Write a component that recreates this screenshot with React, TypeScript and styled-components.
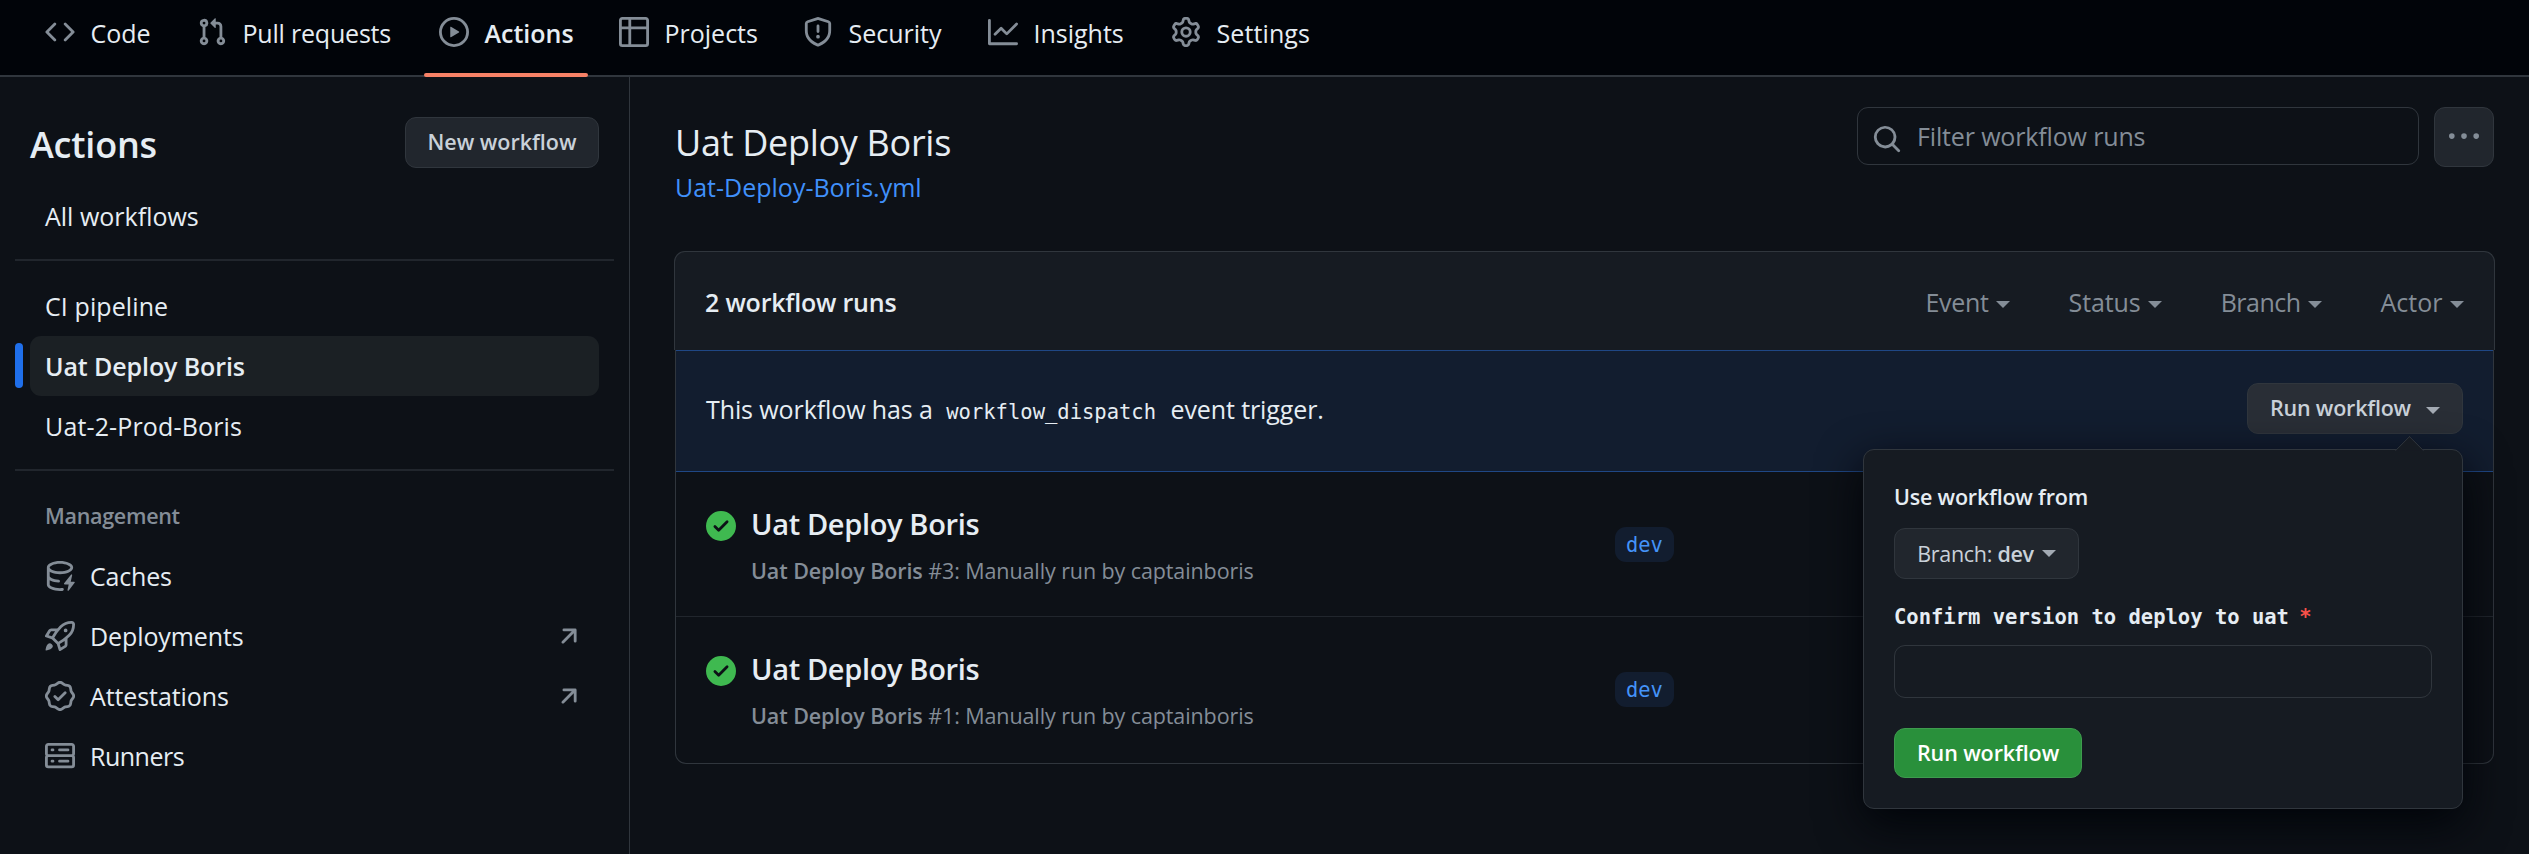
import React from 'react';
import styled, { createGlobalStyle, css } from 'styled-components';

const color = {
  canvas: '#0d1117',
  header: '#010409',
  subtle: '#161b22',
  border: '#30363d',
  divider: '#21262d',
  text: '#e6edf3',
  muted: '#848d97',
  button: '#21262d',
  buttonText: '#c9d1d9',
  link: '#4090fa',
};

const sans = "'Open Sans', 'Noto Sans', sans-serif";
const mono = "'DejaVu Sans Mono', 'Liberation Mono', monospace";

const GlobalStyle = createGlobalStyle`
  * { box-sizing: border-box; }
  body {
    margin: 0;
    background: ${color.canvas};
    color: ${color.text};
    font-family: ${sans};
    font-size: 25px;
    overflow: hidden;
  }
  button, input { font-family: inherit; margin: 0; }
`;

/* ---------- icons ---------- */

const paths = {
  code: 'm11.28 3.22 4.25 4.25a.75.75 0 0 1 0 1.06l-4.25 4.25a.749.749 0 0 1-1.275-.326.749.749 0 0 1 .215-.734L13.94 8l-3.72-3.72a.749.749 0 0 1 .326-1.275.749.749 0 0 1 .734.215Zm-6.56 0a.751.751 0 0 1 1.042.018.751.751 0 0 1 .018 1.042L2.06 8l3.72 3.72a.749.749 0 0 1-.326 1.275.749.749 0 0 1-.734-.215L.47 8.53a.75.75 0 0 1 0-1.06Z',
  pull: 'M1.5 3.25a2.25 2.25 0 1 1 3 2.122v5.256a2.251 2.251 0 1 1-1.5 0V5.372A2.25 2.25 0 0 1 1.5 3.25Zm5.677-.177L9.573.677A.25.25 0 0 1 10 .854V2.5h1A2.5 2.5 0 0 1 13.5 5v5.628a2.251 2.251 0 1 1-1.5 0V5a1 1 0 0 0-1-1h-1v1.646a.25.25 0 0 1-.427.177L7.177 3.427a.25.25 0 0 1 0-.354ZM3.75 2.5a.75.75 0 1 0 0 1.5.75.75 0 0 0 0-1.5Zm0 9.5a.75.75 0 1 0 0 1.5.75.75 0 0 0 0-1.5Zm8.25.75a.75.75 0 1 0 1.5 0 .75.75 0 0 0-1.5 0Z',
  play: 'M8 0a8 8 0 1 1 0 16A8 8 0 0 1 8 0ZM1.5 8a6.5 6.5 0 1 0 13 0 6.5 6.5 0 0 0-13 0Zm4.879-2.773 4.264 2.559a.25.25 0 0 1 0 .428l-4.264 2.559A.25.25 0 0 1 6 10.559V5.442a.25.25 0 0 1 .379-.215Z',
  table: 'M0 1.75C0 .784.784 0 1.75 0h12.5C15.216 0 16 .784 16 1.75v12.5A1.75 1.75 0 0 1 14.25 16H1.75A1.75 1.75 0 0 1 0 14.25ZM6.5 6.5v8h7.75a.25.25 0 0 0 .25-.25V6.5Zm8-1.5V1.75a.25.25 0 0 0-.25-.25H6.5V5Zm-13 1.5v7.75c0 .138.112.25.25.25H5v-8ZM5 5V1.5H1.75a.25.25 0 0 0-.25.25V5Z',
  shield: 'M7.467.133a1.748 1.748 0 0 1 1.066 0l5.25 1.68A1.75 1.75 0 0 1 15 3.48V7c0 1.566-.32 3.182-1.303 4.682-.983 1.498-2.585 2.813-5.032 3.855a1.697 1.697 0 0 1-1.33 0c-2.447-1.042-4.049-2.357-5.032-3.855C1.32 10.182 1 8.566 1 7V3.48a1.75 1.75 0 0 1 1.217-1.667Zm.61 1.429a.25.25 0 0 0-.153 0l-5.25 1.68a.25.25 0 0 0-.174.238V7c0 1.358.275 2.666 1.057 3.86.784 1.194 2.121 2.34 4.366 3.297a.196.196 0 0 0 .154 0c2.245-.956 3.582-2.104 4.366-3.298C13.225 9.666 13.5 8.36 13.5 7V3.48a.251.251 0 0 0-.174-.237l-5.25-1.68ZM8.75 4.75v3a.75.75 0 0 1-1.5 0v-3a.75.75 0 0 1 1.5 0ZM9 10.5a1 1 0 1 1-2 0 1 1 0 0 1 2 0Z',
  graph: 'M1.5 1.75V13.5h13.75a.75.75 0 0 1 0 1.5H.75a.75.75 0 0 1-.75-.75V1.75a.75.75 0 0 1 1.5 0Zm14.28 2.53-5.25 5.25a.75.75 0 0 1-1.06 0L7 7.06 4.28 9.78a.751.751 0 0 1-1.042-.018.751.751 0 0 1-.018-1.042l3.25-3.25a.75.75 0 0 1 1.06 0L10 7.94l4.72-4.72a.751.751 0 0 1 1.042.018.751.751 0 0 1 .018 1.042Z',
  gear: 'M8 0a8.2 8.2 0 0 1 .701.031C9.444.095 9.99.645 10.16 1.29l.288 1.107c.018.066.079.158.212.224.231.114.454.243.668.386.123.082.233.09.299.071l1.103-.303c.644-.176 1.392.021 1.82.63.27.385.506.792.704 1.218.315.675.111 1.422-.364 1.891l-.814.806c-.049.048-.098.147-.088.294.016.257.016.515 0 .772-.01.147.038.246.088.294l.814.806c.475.469.679 1.216.364 1.891a7.977 7.977 0 0 1-.704 1.217c-.428.61-1.176.807-1.82.63l-1.102-.302c-.067-.019-.177-.011-.3.071a5.909 5.909 0 0 1-.668.386c-.133.066-.194.158-.211.224l-.29 1.106c-.168.646-.715 1.196-1.458 1.26a8.006 8.006 0 0 1-1.402 0c-.743-.064-1.289-.614-1.458-1.26l-.289-1.106c-.018-.066-.079-.158-.212-.224a5.738 5.738 0 0 1-.668-.386c-.123-.082-.233-.09-.299-.071l-1.103.303c-.644.176-1.392-.021-1.82-.63a8.12 8.12 0 0 1-.704-1.218c-.315-.675-.111-1.422.363-1.891l.815-.806c.05-.048.098-.147.088-.294a6.214 6.214 0 0 1 0-.772c.01-.147-.038-.246-.088-.294l-.815-.806C.635 6.045.431 5.298.746 4.623a7.92 7.92 0 0 1 .704-1.217c.428-.61 1.176-.807 1.82-.63l1.102.302c.067.019.177.011.3-.071.214-.143.437-.272.668-.386.133-.066.194-.158.211-.224l.29-1.106C6.009.645 6.556.095 7.299.03 7.53.01 7.764 0 8 0Zm-.571 1.525c-.036.003-.108.036-.137.146l-.289 1.105c-.147.561-.549.967-.998 1.189-.173.086-.34.183-.5.29-.417.278-.97.423-1.529.27l-1.103-.303c-.109-.03-.175.016-.195.045-.22.312-.412.644-.573.99-.014.031-.021.11.059.19l.815.806c.411.406.562.957.53 1.456a4.709 4.709 0 0 0 0 .582c.032.499-.119 1.05-.53 1.456l-.815.806c-.081.08-.073.159-.059.19.162.346.353.677.573.989.02.03.085.076.195.046l1.102-.303c.56-.153 1.113-.008 1.53.27.161.107.328.204.501.29.447.222.85.629.997 1.189l.289 1.105c.029.109.101.143.137.146a6.6 6.6 0 0 0 1.142 0c.036-.003.108-.036.137-.146l.289-1.105c.147-.561.549-.967.998-1.189.173-.086.34-.183.5-.29.417-.278.97-.423 1.529-.27l1.103.303c.109.029.175-.016.195-.045.22-.313.411-.644.573-.99.014-.031.021-.11-.059-.19l-.815-.806c-.411-.406-.562-.957-.53-1.456a4.709 4.709 0 0 0 0-.582c-.032-.499.119-1.05.53-1.456l.815-.806c.081-.08.073-.159.059-.19a6.464 6.464 0 0 0-.573-.989c-.02-.03-.085-.076-.195-.046l-1.102.303c-.56.153-1.113.008-1.53-.27a4.44 4.44 0 0 0-.501-.29c-.447-.222-.85-.629-.997-1.189l-.289-1.105c-.029-.11-.101-.143-.137-.146a6.6 6.6 0 0 0-1.142 0ZM11 8a3 3 0 1 1-6 0 3 3 0 0 1 6 0ZM9.5 8a1.5 1.5 0 1 0-3.001.001A1.5 1.5 0 0 0 9.5 8Z',
  cache: 'M2.5 5.724V8c0 .248.238.7 1.169 1.159.874.43 2.144.745 3.62.822a.75.75 0 1 1-.078 1.498c-1.622-.085-3.102-.432-4.204-.975a5.565 5.565 0 0 1-.507-.28V12.5c0 .133.058.318.282.551.227.237.591.483 1.101.707 1.015.447 2.47.742 4.117.742.406 0 .802-.018 1.183-.052a.751.751 0 1 1 .134 1.494C8.89 15.98 8.45 16 8 16c-1.805 0-3.475-.32-4.721-.869-.623-.274-1.173-.619-1.579-1.041-.408-.425-.7-.964-.7-1.59v-9c0-.626.292-1.165.7-1.591.406-.42.956-.766 1.579-1.04C4.525.32 6.195 0 8 0c1.806 0 3.476.32 4.721.869.623.274 1.173.619 1.579 1.041.408.425.7.964.7 1.59 0 .626-.292 1.165-.7 1.591-.406.42-.956.766-1.578 1.04C11.475 6.68 9.805 7 8 7c-1.805 0-3.475-.32-4.721-.869a6.15 6.15 0 0 1-.779-.407Zm0-2.224c0 .133.058.318.282.551.227.237.591.483 1.101.707C4.898 5.205 6.353 5.5 8 5.5c1.646 0 3.101-.295 4.118-.742.508-.224.873-.471 1.1-.708.224-.232.282-.417.282-.55 0-.133-.058-.318-.282-.551-.227-.237-.591-.483-1.101-.707C11.102 1.795 9.647 1.5 8 1.5c-1.646 0-3.101.295-4.118.742-.508.224-.873.471-1.1.708-.224.232-.282.417-.282.55ZM14.49 7.582a.375.375 0 0 0-.66-.313l-3.625 4.625a.375.375 0 0 0 .295.606h2.127l-.619 2.922a.375.375 0 0 0 .666.304l3.125-4.125A.375.375 0 0 0 15.5 11h-1.778l.769-3.418Z',
  rocket: 'M14.064 0h.186C15.216 0 16 .784 16 1.75v.186a8.752 8.752 0 0 1-2.564 6.186l-.458.459c-.314.314-.641.616-.979.904v3.207c0 .608-.315 1.172-.833 1.49l-2.774 1.707a.749.749 0 0 1-1.11-.418l-.954-3.102a1.214 1.214 0 0 1-.145-.125L3.754 9.816a1.218 1.218 0 0 1-.124-.145L.528 8.717a.749.749 0 0 1-.418-1.11l1.71-2.774A1.748 1.748 0 0 1 3.31 4h3.204c.288-.338.59-.665.904-.979l.459-.458A8.749 8.749 0 0 1 14.064 0ZM8.938 3.623h-.002l-.458.458c-.76.76-1.437 1.598-2.02 2.5l-1.5 2.317 2.143 2.143 2.317-1.5c.902-.583 1.74-1.26 2.499-2.02l.459-.458a7.25 7.25 0 0 0 2.123-5.127V1.75a.25.25 0 0 0-.25-.25h-.186a7.249 7.249 0 0 0-5.125 2.123ZM3.56 14.56c-.732.732-2.334 1.045-3.005 1.148a.234.234 0 0 1-.201-.064.234.234 0 0 1-.064-.201c.103-.671.416-2.273 1.15-3.003a1.502 1.502 0 1 1 2.12 2.12Zm6.94-3.935c-.088.06-.177.118-.266.175l-2.35 1.521.548 1.783 1.949-1.2a.25.25 0 0 0 .119-.213ZM3.678 8.116 5.2 5.766c.058-.09.117-.178.176-.266H3.309a.25.25 0 0 0-.213.119l-1.2 1.95ZM12 5a1 1 0 1 1-2 0 1 1 0 0 1 2 0Z',
  verified: 'm9.585.52.929.68c.153.112.331.186.518.215l1.138.175a2.678 2.678 0 0 1 2.24 2.24l.174 1.139c.029.187.103.365.215.518l.68.928a2.677 2.677 0 0 1 0 3.17l-.68.928a1.174 1.174 0 0 0-.215.518l-.175 1.138a2.678 2.678 0 0 1-2.241 2.241l-1.138.175a1.17 1.17 0 0 0-.518.215l-.928.68a2.677 2.677 0 0 1-3.17 0l-.928-.68a1.174 1.174 0 0 0-.518-.215L3.83 14.41a2.678 2.678 0 0 1-2.24-2.24l-.175-1.138a1.17 1.17 0 0 0-.215-.518l-.68-.928a2.677 2.677 0 0 1 0-3.17l.68-.928c.112-.153.186-.331.215-.518l.175-1.14a2.678 2.678 0 0 1 2.24-2.24l1.139-.175c.187-.029.365-.103.518-.215l.928-.68a2.677 2.677 0 0 1 3.17 0ZM7.303 1.728l-.927.68a2.67 2.67 0 0 1-1.18.489l-1.137.174a1.179 1.179 0 0 0-.987.987l-.174 1.136a2.677 2.677 0 0 1-.489 1.18l-.68.928a1.18 1.18 0 0 0 0 1.394l.68.927c.256.348.424.753.489 1.18l.174 1.137c.078.509.478.909.987.987l1.136.174a2.67 2.67 0 0 1 1.18.489l.928.68c.414.305.979.305 1.394 0l.927-.68a2.67 2.67 0 0 1 1.18-.489l1.137-.174a1.18 1.18 0 0 0 .987-.987l.174-1.136a2.67 2.67 0 0 1 .489-1.18l.68-.928a1.176 1.176 0 0 0 0-1.394l-.68-.927a2.686 2.686 0 0 1-.489-1.18l-.174-1.137a1.179 1.179 0 0 0-.987-.987l-1.136-.174a2.677 2.677 0 0 1-1.18-.489l-.928-.68a1.176 1.176 0 0 0-1.394 0ZM11.28 6.78l-3.75 3.75a.75.75 0 0 1-1.06 0L4.72 8.78a.751.751 0 0 1 .018-1.042.751.751 0 0 1 1.042-.018L7 8.94l3.22-3.22a.751.751 0 0 1 1.042.018.751.751 0 0 1 .018 1.042Z',
  server: 'M1.75 1h12.5c.966 0 1.75.784 1.75 1.75v4c0 .372-.116.717-.314 1 .198.283.314.628.314 1v4a1.75 1.75 0 0 1-1.75 1.75H1.75A1.75 1.75 0 0 1 0 12.75v-4c0-.358.109-.707.314-1a1.739 1.739 0 0 1-.314-1v-4C0 1.784.784 1 1.75 1ZM1.5 2.75v4c0 .138.112.25.25.25h12.5a.25.25 0 0 0 .25-.25v-4a.25.25 0 0 0-.25-.25H1.75a.25.25 0 0 0-.25.25Zm.25 5.75a.25.25 0 0 0-.25.25v4c0 .138.112.25.25.25h12.5a.25.25 0 0 0 .25-.25v-4a.25.25 0 0 0-.25-.25ZM7 4.75A.75.75 0 0 1 7.75 4h4.5a.75.75 0 0 1 0 1.5h-4.5A.75.75 0 0 1 7 4.75ZM7.75 10h4.5a.75.75 0 0 1 0 1.5h-4.5a.75.75 0 0 1 0-1.5ZM3 4.75A.75.75 0 0 1 3.75 4h.5a.75.75 0 0 1 0 1.5h-.5A.75.75 0 0 1 3 4.75ZM3.75 10h.5a.75.75 0 0 1 0 1.5h-.5a.75.75 0 0 1 0-1.5Z',
  external: 'M4.53 4.75A.75.75 0 0 1 5.28 4h6.01a.75.75 0 0 1 .75.75v6.01a.75.75 0 0 1-1.5 0v-4.2l-5.26 5.261a.749.749 0 0 1-1.275-.326.749.749 0 0 1 .215-.734L9.48 5.5h-4.2a.75.75 0 0 1-.75-.75Z',
  search: 'M10.68 11.74a6 6 0 0 1-7.922-8.982 6 6 0 0 1 8.982 7.922l3.04 3.04a.749.749 0 0 1-.326 1.275.749.749 0 0 1-.734-.215ZM11.5 7a4.499 4.499 0 1 0-8.997 0A4.499 4.499 0 0 0 11.5 7Z',
  kebab: 'M8 9a1.5 1.5 0 1 0 0-3 1.5 1.5 0 0 0 0 3ZM1.5 9a1.5 1.5 0 1 0 0-3 1.5 1.5 0 0 0 0 3Zm13 0a1.5 1.5 0 1 0 0-3 1.5 1.5 0 0 0 0 3Z',
  success: 'M8 16A8 8 0 1 1 8 0a8 8 0 0 1 0 16Zm3.78-9.72a.751.751 0 0 0-.018-1.042.751.751 0 0 0-1.042-.018L6.75 9.19 5.28 7.72a.751.751 0 0 0-1.042.018.751.751 0 0 0-.018 1.042l2 2a.75.75 0 0 0 1.06 0Z',
};

const IconSvg = styled.svg`
  display: block;
  flex: none;
  width: 30px;
  height: 30px;
  fill: ${color.muted};
`;

const Icon = ({ name, className }: { name: keyof typeof paths; className?: string }) => (
  <IconSvg viewBox="0 0 16 16" className={className} aria-hidden>
    <path d={paths[name]} />
  </IconSvg>
);

const Caret = styled.span<{ $color?: string }>`
  flex: none;
  width: 0;
  height: 0;
  border: 7px solid transparent;
  border-top-color: ${(p) => p.$color ?? color.muted};
  border-bottom: 0;
`;

/* ---------- top navigation ---------- */

const RepoNav = styled.nav`
  display: flex;
  height: 77px;
  padding-left: 30px;
  background: ${color.header};
  border-bottom: 2px solid ${color.border};
`;

const NavItem = styled.a<{ $width: number; $active?: boolean; $track?: number }>`
  position: relative;
  display: flex;
  align-items: center;
  gap: 15.5px;
  width: ${(p) => p.$width}px;
  height: 65px;
  padding-left: 15px;
  white-space: nowrap;
  letter-spacing: ${(p) => p.$track ?? 0}px;
  font-weight: ${(p) => (p.$active ? 600 : 400)};
  ${IconSvg} {
    margin-bottom: 1px;
  }
  ${(p) =>
    p.$active &&
    css`
      &::after {
        content: '';
        position: absolute;
        left: 0;
        right: 16px;
        top: 73px;
        height: 4px;
        border-radius: 2px;
        background: #f78166;
      }
    `}
`;

/* ---------- sidebar ---------- */

const Page = styled.div`
  display: flex;
  height: 777px;
`;

const Sidebar = styled.aside`
  flex: none;
  width: 630px;
  padding: 40px 15px 0;
  border-right: 1px solid ${color.border};
`;

const SidebarHeader = styled.header`
  display: flex;
  align-items: center;
  justify-content: space-between;
  height: 51px;
  margin: 0 15px 18px;
`;

const SidebarTitle = styled.h2`
  margin: 4px 0 0;
  font-size: 36px;
  font-weight: 600;
  line-height: 50px;
  letter-spacing: -0.2px;
`;

const Button = styled.button`
  display: inline-flex;
  align-items: center;
  justify-content: center;
  height: 51px;
  padding: 0 22px;
  border: 1px solid ${color.border};
  border-radius: 11px;
  background: ${color.button};
  color: ${color.buttonText};
  font-size: 21.5px;
  font-weight: 600;
  line-height: 1;
  white-space: nowrap;
`;

const NewWorkflowButton = styled(Button)`
  width: 194px;
  padding-bottom: 1px;
`;

const SidebarItem = styled.a<{ $selected?: boolean; $track?: number }>`
  position: relative;
  display: flex;
  align-items: center;
  gap: 15px;
  height: 60px;
  margin: 0 15px;
  padding: 0 15px;
  border-radius: 11px;
  letter-spacing: ${(p) => p.$track ?? 0}px;
  ${(p) =>
    p.$selected &&
    css`
      background: #1b2024;
      font-weight: 600;
      &::before {
        content: '';
        position: absolute;
        left: -15px;
        top: 7px;
        width: 8px;
        height: 45px;
        border-radius: 4px;
        background: #1f6feb;
      }
    `}
`;

const ItemLabel = styled.span`
  flex: 1;
`;

const SidebarDivider = styled.hr`
  height: 2px;
  margin: 13px 0 15px;
  border: 0;
  background: ${color.divider};
`;

const GroupTitle = styled.h3`
  height: 60px;
  margin: 0 30px;
  color: ${color.muted};
  font-size: 21.5px;
  font-weight: 600;
  line-height: 59px;
  letter-spacing: -0.3px;
`;

/* ---------- main column ---------- */

const Main = styled.main`
  flex: 1;
  padding: 30px 34px 0 44px;
`;

const MainHeader = styled.header`
  display: flex;
  justify-content: space-between;
  height: 144px;
`;

const Titles = styled.div`
  padding: 11px 0 0 1px;
`;

const WorkflowTitle = styled.h1`
  margin: 0;
  font-size: 36px;
  font-weight: 400;
  line-height: 50px;
  letter-spacing: -0.3px;
`;

const WorkflowFile = styled.a`
  display: block;
  color: ${color.link};
  line-height: 39px;
`;

const Tools = styled.div`
  display: flex;
  align-items: flex-start;
  gap: 15px;
  padding-right: 1px;
`;

const SearchBox = styled.label`
  display: flex;
  align-items: center;
  gap: 15px;
  width: 562px;
  height: 58px;
  padding-left: 14px;
  border: 1px solid ${color.border};
  border-radius: 11px;
`;

const SearchIcon = styled(Icon)`
  margin-top: 6px;
`;

const SearchInput = styled.input`
  flex: 1;
  padding: 0;
  border: 0;
  outline: 0;
  background: transparent;
  color: ${color.text};
  font-size: 25px;
  letter-spacing: -0.15px;
  &::placeholder {
    color: ${color.muted};
    opacity: 1;
  }
`;

const MoreButton = styled(Button)`
  width: 60px;
  height: 60px;
  padding: 0;
`;

/* ---------- runs table ---------- */

const TableHeader = styled.div`
  display: flex;
  align-items: center;
  justify-content: space-between;
  height: 99px;
  padding: 2px 30px 0;
  border: 1px solid ${color.border};
  border-bottom: 0;
  border-radius: 11px 11px 0 0;
  background: ${color.subtle};
`;

const RunCount = styled.strong`
  font-weight: 600;
  letter-spacing: -0.2px;
`;

const Filters = styled.div`
  display: flex;
  gap: 58.5px;
`;

const Filter = styled.span<{ $track?: number }>`
  display: flex;
  align-items: center;
  gap: 7.5px;
  color: ${color.muted};
  letter-spacing: ${(p) => p.$track ?? 0}px;
  ${Caret} {
    margin-top: 5px;
  }
`;

const TableBody = styled.div`
  margin: 0 1px;
  border: 1px solid ${color.border};
  border-top: 0;
  border-radius: 0 0 11px 11px;
`;

const DispatchRow = styled.div`
  display: flex;
  align-items: center;
  justify-content: space-between;
  height: 122px;
  padding: 0 30px 5px;
  border: solid #1f4785;
  border-width: 1px 0;
  background: #121d2f;
`;

const Trigger = styled.span`
  letter-spacing: -0.1px;
`;

const Code = styled.code`
  margin: 0 8px 0 7px;
  font-family: ${mono};
  font-size: 20.5px;
  letter-spacing: 0;
`;

const RunMenu = styled.div`
  position: relative;
`;

const RunMenuButton = styled(Button)`
  width: 216px;
  padding-bottom: 1px;
  gap: 15px;
  letter-spacing: -0.2px;
  background: #292e36;
  ${Caret} {
    margin-top: 4px;
  }
`;

const RunRow = styled.article<{ $height: number }>`
  display: flex;
  align-items: flex-start;
  height: ${(p) => p.$height}px;
  padding: 0 30px;
  & + & {
    border-top: 1px solid ${color.divider};
  }
`;

const StatusIcon = styled(Icon)`
  margin: 39px 14px 0 0;
  fill: #3fb950;
`;

const RunInfo = styled.div`
  width: 865px;
  padding-top: 32px;
`;

const RunTitle = styled.h4`
  margin: 0 0 7px;
  padding-left: 1px;
  font-size: 29px;
  font-weight: 600;
  line-height: 40px;
  letter-spacing: -0.35px;
`;

const RunMeta = styled.p`
  margin: 0;
  padding-left: 1px;
  color: ${color.muted};
  font-size: 21.5px;
  line-height: 40px;
  letter-spacing: -0.1px;
  b {
    font-weight: 600;
  }
`;

const BranchTag = styled.span`
  height: 35px;
  margin-top: 55px;
  padding: 0 11px;
  border-radius: 11px;
  background: #121d2f;
  color: #4493f8;
  font-family: ${mono};
  font-size: 20.4px;
  line-height: 36px;
`;

/* ---------- run workflow popover ---------- */

const Popover = styled.div`
  position: absolute;
  z-index: 1;
  top: 66px;
  right: 0;
  display: flex;
  flex-direction: column;
  align-items: flex-start;
  width: 600px;
  height: 360px;
  padding: 31px 30px 30px;
  border: 1px solid ${color.border};
  border-radius: 11px;
  background: ${color.subtle};
  box-shadow: 0 15px 45px #010409;
  &::before {
    content: '';
    position: absolute;
    top: -10px;
    right: 42px;
    width: 19px;
    height: 19px;
    border: 1px solid ${color.border};
    background: ${color.subtle};
    clip-path: polygon(0 0, 100% 0, 0 100%);
    transform: rotate(45deg);
  }
`;

const PopoverTitle = styled.strong`
  font-size: 21.5px;
  font-weight: 600;
  line-height: 32px;
  letter-spacing: -0.2px;
`;

const BranchButton = styled(Button)`
  width: 185px;
  margin-top: 15px;
  font-weight: 400;
  letter-spacing: -0.3px;
  white-space: pre;
  ${Caret} {
    margin-left: 8px;
  }
  b {
    font-weight: 600;
  }
`;

const FieldLabel = styled.label`
  margin-top: 23px;
  font-family: ${mono};
  font-size: 20.5px;
  font-weight: 700;
  line-height: 30px;
`;

const Required = styled.span`
  margin-left: -2px;
  color: #f85149;
`;

const VersionInput = styled.input`
  width: 100%;
  height: 53px;
  margin-top: 13px;
  border: 1px solid ${color.border};
  border-radius: 11px;
  background: transparent;
  color: ${color.text};
`;

const SubmitButton = styled(Button)`
  width: 188px;
  height: 50px;
  margin-top: 30px;
  border-color: #3e9b4e;
  background: #29903b;
  color: #fff;
  letter-spacing: -0.1px;
`;

const navItems: { icon: keyof typeof paths; label: string; width: number; active?: boolean; track?: number }[] = [
  { icon: 'code', label: 'Code', width: 152 },
  { icon: 'pull', label: 'Pull requests', width: 242, track: -0.2 },
  { icon: 'play', label: 'Actions', width: 180, active: true },
  { icon: 'table', label: 'Projects', width: 184 },
  { icon: 'shield', label: 'Security', width: 185 },
  { icon: 'graph', label: 'Insights', width: 183 },
  { icon: 'gear', label: 'Settings', width: 184, track: 0.1 },
];

const management: { icon: keyof typeof paths; label: string; external?: boolean; track?: number }[] = [
  { icon: 'cache', label: 'Caches', track: -0.2 },
  { icon: 'rocket', label: 'Deployments', external: true, track: -0.1 },
  { icon: 'verified', label: 'Attestations', external: true, track: -0.1 },
  { icon: 'server', label: 'Runners', track: -0.5 },
];

const filters = [
  { label: 'Event', track: -0.3 },
  { label: 'Status', track: -0.1 },
  { label: 'Branch', track: -0.5 },
  { label: 'Actor' },
];

const runs = [
  { id: 3, height: 144 },
  { id: 1, height: 147 },
];

export default function App() {
  return (
    <>
      <GlobalStyle />
      <RepoNav>
        {navItems.map((n) => (
          <NavItem key={n.label} $width={n.width} $active={n.active} $track={n.track}>
            <Icon name={n.icon} />
            {n.label}
          </NavItem>
        ))}
      </RepoNav>
      <Page>
        <Sidebar>
          <SidebarHeader>
            <SidebarTitle>Actions</SidebarTitle>
            <NewWorkflowButton>New workflow</NewWorkflowButton>
          </SidebarHeader>
          <SidebarItem>All workflows</SidebarItem>
          <SidebarDivider />
          <SidebarItem $track={0.1}>CI pipeline</SidebarItem>
          <SidebarItem $selected $track={-0.1}>Uat Deploy Boris</SidebarItem>
          <SidebarItem $track={0.15}>Uat-2-Prod-Boris</SidebarItem>
          <SidebarDivider />
          <GroupTitle>Management</GroupTitle>
          {management.map((m) => (
            <SidebarItem key={m.label} $track={m.track}>
              <Icon name={m.icon} />
              <ItemLabel>{m.label}</ItemLabel>
              {m.external && <Icon name="external" />}
            </SidebarItem>
          ))}
        </Sidebar>
        <Main>
          <MainHeader>
            <Titles>
              <WorkflowTitle>Uat Deploy Boris</WorkflowTitle>
              <WorkflowFile>Uat-Deploy-Boris.yml</WorkflowFile>
            </Titles>
            <Tools>
              <SearchBox>
                <SearchIcon name="search" />
                <SearchInput placeholder="Filter workflow runs" />
              </SearchBox>
              <MoreButton aria-label="More options">
                <Icon name="kebab" />
              </MoreButton>
            </Tools>
          </MainHeader>
          <TableHeader>
            <RunCount>2 workflow runs</RunCount>
            <Filters>
              {filters.map((f) => (
                <Filter key={f.label} $track={f.track}>
                  {f.label}
                  <Caret />
                </Filter>
              ))}
            </Filters>
          </TableHeader>
          <TableBody>
            <DispatchRow>
              <Trigger>
                This workflow has a <Code>workflow_dispatch</Code> event trigger.
              </Trigger>
              <RunMenu>
                <RunMenuButton>
                  Run workflow
                  <Caret $color="#a3aab3" />
                </RunMenuButton>
                <Popover>
                  <PopoverTitle>Use workflow from</PopoverTitle>
                  <BranchButton>
                    Branch: <b>dev</b>
                    <Caret $color="#a3aab3" />
                  </BranchButton>
                  <FieldLabel htmlFor="version">
                    Confirm version to deploy to uat <Required>*</Required>
                  </FieldLabel>
                  <VersionInput id="version" />
                  <SubmitButton>Run workflow</SubmitButton>
                </Popover>
              </RunMenu>
            </DispatchRow>
            {runs.map((r) => (
              <RunRow key={r.id} $height={r.height}>
                <StatusIcon name="success" />
                <RunInfo>
                  <RunTitle>Uat Deploy Boris</RunTitle>
                  <RunMeta>
                    <b>Uat Deploy Boris</b> #{r.id}: Manually run by captainboris
                  </RunMeta>
                </RunInfo>
                <BranchTag>dev</BranchTag>
              </RunRow>
            ))}
          </TableBody>
        </Main>
      </Page>
    </>
  );
}
